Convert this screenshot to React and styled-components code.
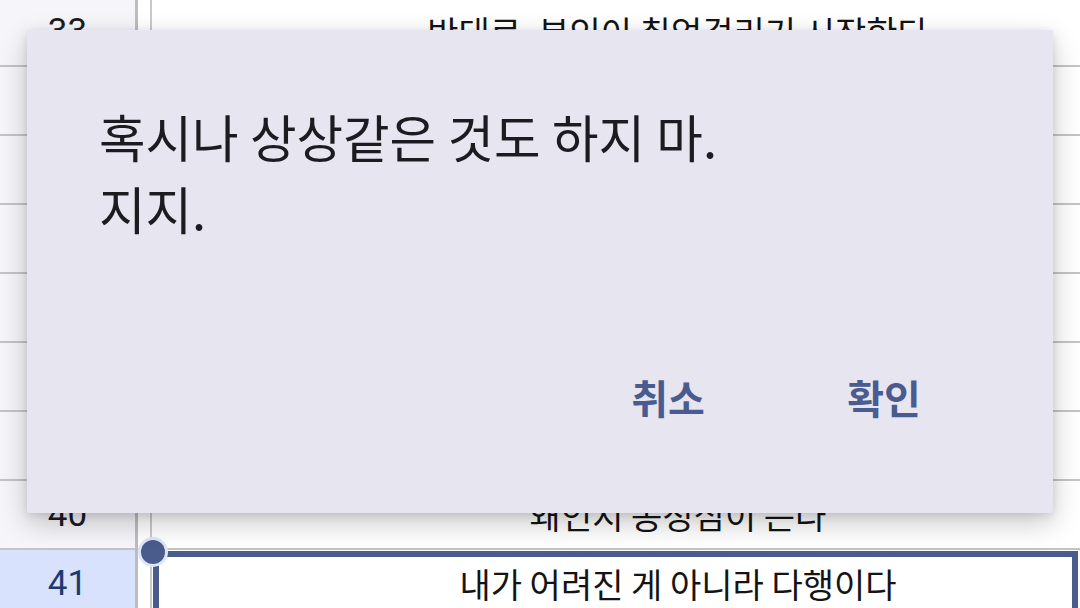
import React from "react";
import styled, { createGlobalStyle } from "styled-components";

const Global = createGlobalStyle`
  html, body { margin: 0; padding: 0; background: #ffffff; }
  body { width: 1080px; height: 608px; overflow: hidden; font-family: "Noto Sans CJK KR", "Noto Sans", sans-serif; }
`;

const Screen = styled.div`
  position: relative;
  width: 1080px;
  height: 608px;
  overflow: hidden;
  background: #ffffff;
`;

const Sheet = styled.div`
  display: flex;
  flex-direction: column;
  margin-top: -2px;
`;

const Row = styled.div`
  display: grid;
  grid-template-columns: 135px 3px 12px 2px 1fr;
  height: 69px;
`;

const RowHeader = styled.div`
  display: flex;
  align-items: center;
  justify-content: center;
  background: ${(p) => (p.$selected ? "#d8e2fd" : "#f6f5fa")};
  color: ${(p) => (p.$selected ? "#1d3a70" : "#1c1b1f")};
  font-family: Roboto, "Noto Sans", sans-serif;
  font-size: 35px;
  border-bottom: 2px solid #c4c4c8;
  box-sizing: border-box;
`;

const HeaderEdge = styled.div`
  background: #bdbdc0;
`;

const Gutter = styled.div`
  background: #ffffff;
  border-bottom: 2px solid #c4c4c8;
  box-sizing: border-box;
`;

const GutterLine = styled.div`
  background: #c9c9cc;
`;

const Cell = styled.div`
  position: relative;
  display: flex;
  align-items: center;
  justify-content: center;
  padding-left: 130px;
  padding-right: 6px;
  background: #ffffff;
  color: #141414;
  font-size: 34px;
  border-bottom: 2px solid #c4c4c8;
  box-sizing: border-box;
  white-space: nowrap;
`;

const Selection = styled.div`
  position: absolute;
  left: 1px;
  top: 1px;
  right: 2px;
  bottom: -40px;
  border: 6px solid #4a5c8c;
  pointer-events: none;
`;

const Handle = styled.div`
  position: absolute;
  left: -18px;
  top: -17px;
  width: 24px;
  height: 24px;
  border-radius: 50%;
  background: #4a5c8c;
  box-shadow: 0 0 0 3px #dde5fb;
`;

const Dialog = styled.div`
  position: absolute;
  left: 27px;
  top: 30px;
  width: 1026px;
  height: 483px;
  box-sizing: border-box;
  display: flex;
  flex-direction: column;
  justify-content: space-between;
  padding: 70px 97px 76px 72px;
  background: #e7e6f0;
  border-radius: 2px;
  box-shadow: 0 10px 28px rgba(0, 0, 0, 0.22), 0 2px 8px rgba(0, 0, 0, 0.1);
`;

const Message = styled.p`
  margin: 0;
  color: #1c1b20;
  font-size: 50.6px;
  line-height: 72px;
  white-space: pre-line;
`;

const Actions = styled.div`
  display: flex;
  justify-content: flex-end;
  gap: 72px;
`;

const ActionButton = styled.button`
  min-width: 144px;
  height: 80px;
  padding: 0;
  border: none;
  background: transparent;
  color: #4a5c8f;
  font-family: "Noto Sans CJK KR", "Noto Sans", sans-serif;
  font-size: 40px;
  font-weight: 700;
`;

const rows = [
  { n: 33, text: "반대로, 본인이 취업걸리기 시작한다" },
  { n: 34, text: "그래도 아직은 괜찮다" },
  { n: 35, text: "어차피 다 지나갈 일이다" },
  { n: 36, text: "오늘도 하루가 끝났다" },
  { n: 37, text: "조금만 더 버텨보자" },
  { n: 38, text: "생각보다 어렵지 않았다" },
  { n: 39, text: "이제 와서 후회해도 늦었다" },
  { n: 40, text: "왜인지 동정심이 든다" },
  { n: 41, text: "내가 어려진 게 아니라 다행이다", selected: true },
];

export default function App() {
  return (
    <Screen>
      <Global />
      <Sheet>
        {rows.map((r) => (
          <Row key={r.n}>
            <RowHeader $selected={r.selected}>{r.n}</RowHeader>
            <HeaderEdge />
            <Gutter />
            <GutterLine />
            <Cell>
              {r.text}
              {r.selected && (
                <Selection>
                  <Handle />
                </Selection>
              )}
            </Cell>
          </Row>
        ))}
      </Sheet>
      <Dialog>
        <Message>{"혹시나 상상같은 것도 하지 마.\n지지."}</Message>
        <Actions>
          <ActionButton>취소</ActionButton>
          <ActionButton>확인</ActionButton>
        </Actions>
      </Dialog>
    </Screen>
  );
}
